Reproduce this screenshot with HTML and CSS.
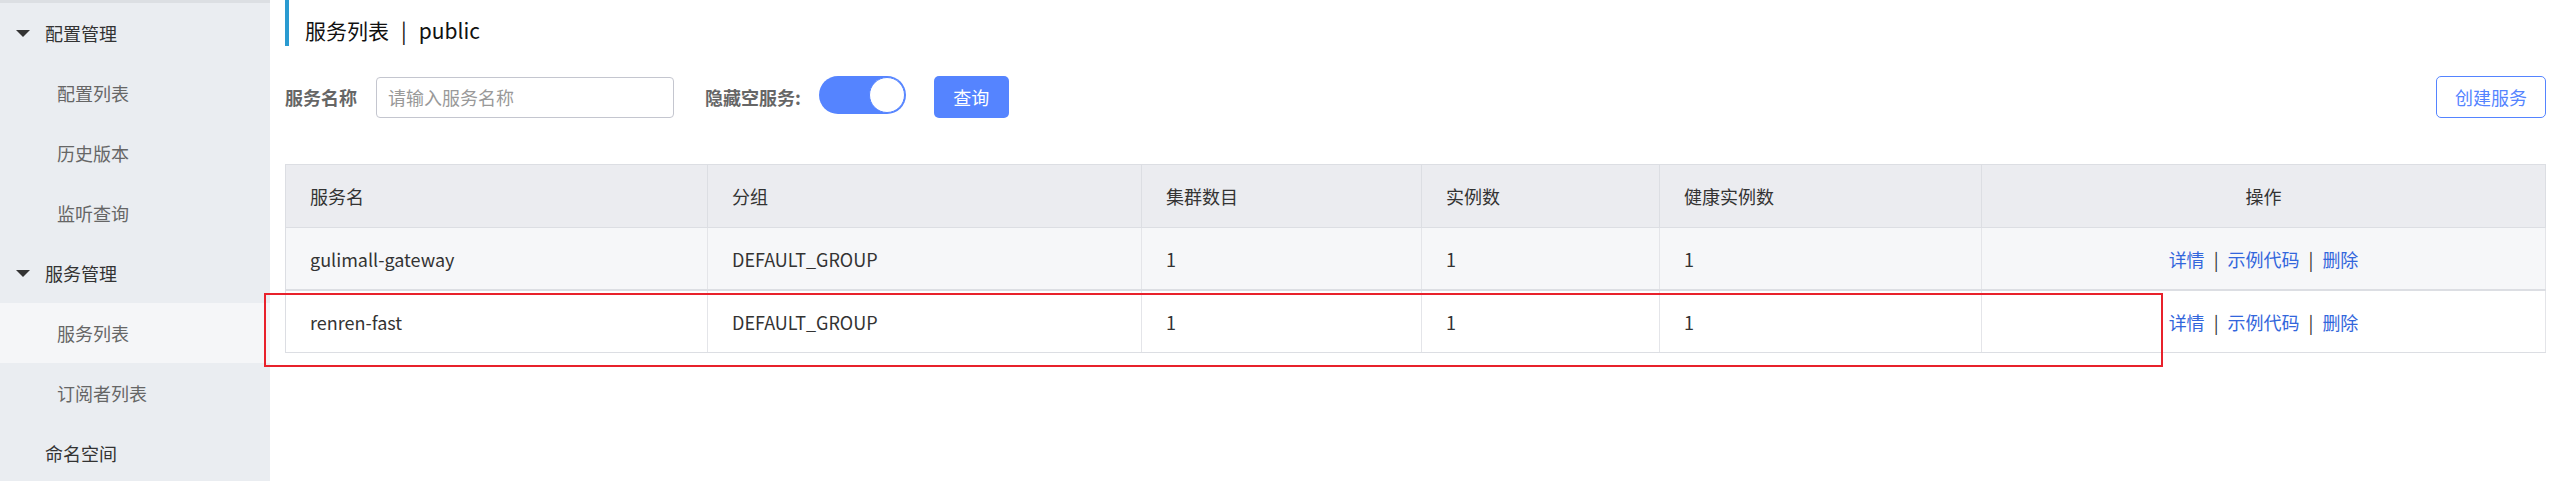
FILE: index.html
```html
<!DOCTYPE html>
<html lang="zh-CN">

<head>
    <meta charset="UTF-8">
    <meta name="viewport" content="width=device-width, initial-scale=1.0">
    <title>服务列表</title>
    <link rel="stylesheet" href="styles.css">
</head>

<body>

    <div class="layout">
        <div class="sidebar">
            <div class="menu-group"><span class="arrow"></span>配置管理</div>
            <div class="menu-item">配置列表</div>
            <div class="menu-item">历史版本</div>
            <div class="menu-item">监听查询</div>
            <div class="menu-group"><span class="arrow"></span>服务管理</div>
            <div class="menu-item active">服务列表</div>
            <div class="menu-item">订阅者列表</div>
            <div class="menu-group plain">命名空间</div>
        </div>

        <div class="main">
            <div class="page-title">服务列表<span class="title-sep">|</span>public</div>

            <div class="toolbar">
                <span class="field-label">服务名称</span>
                <input class="search-input" type="text" placeholder="请输入服务名称">
                <span class="field-label hide-label">隐藏空服务:</span>
                <span class="switch"><span class="knob"></span></span>
                <button class="btn-primary">查询</button>
                <button class="btn-outline">创建服务</button>
            </div>

            <table class="service-table">
                <colgroup>
                    <col style="width: 422px">
                    <col style="width: 434px">
                    <col style="width: 280px">
                    <col style="width: 238px">
                    <col style="width: 322px">
                    <col>
                </colgroup>
                <thead>
                    <tr>
                        <th>服务名</th>
                        <th>分组</th>
                        <th>集群数目</th>
                        <th>实例数</th>
                        <th>健康实例数</th>
                        <th class="ops">操作</th>
                    </tr>
                </thead>
                <tbody>
                    <tr class="hover">
                        <td>gulimall-gateway</td>
                        <td>DEFAULT_GROUP</td>
                        <td>1</td>
                        <td>1</td>
                        <td>1</td>
                        <td class="ops"><a>详情</a><span class="sep">|</span><a>示例代码</a><span class="sep">|</span><a>删除</a></td>
                    </tr>
                    <tr>
                        <td>renren-fast</td>
                        <td>DEFAULT_GROUP</td>
                        <td>1</td>
                        <td>1</td>
                        <td>1</td>
                        <td class="ops"><a>详情</a><span class="sep">|</span><a>示例代码</a><span class="sep">|</span><a>删除</a></td>
                    </tr>
                </tbody>
            </table>
        </div>
    </div>

    <div class="mark-box"></div>

</body>

</html>
```

FILE: styles.css
```css
body {
    margin: 0;
    font-family: "Noto Sans CJK SC", "Noto Sans", sans-serif;
    font-size: 18px;
    color: #333;
    background: #fff;
}

.layout {
    display: flex;
    height: 481px;
    overflow: hidden;
}

.sidebar {
    width: 270px;
    flex-shrink: 0;
    background: #eaedf1;
    border-top: 3px solid #dcdfe3;
}

.menu-group,
.menu-item {
    height: 60px;
    display: flex;
    align-items: center;
}

.menu-group {
    padding-left: 16px;
    color: #333;
}

.menu-group.plain {
    padding-left: 45px;
}

.arrow {
    width: 0;
    height: 0;
    border-left: 7px solid transparent;
    border-right: 7px solid transparent;
    border-top: 7px solid #333;
    margin-right: 15px;
}

.menu-item {
    padding-left: 57px;
    color: #666;
}

.menu-item.active {
    background: #f5f6f8;
}

.main {
    flex: 1;
    padding: 0 14px 0 15px;
}

.page-title {
    height: 46px;
    box-sizing: border-box;
    border-left: 4px solid #2a9bd1;
    padding: 15px 0 0 16px;
    font-size: 21px;
    line-height: 30px;
    color: #111;
}

.title-sep {
    margin: 0 12px;
}

.toolbar {
    display: flex;
    align-items: center;
    height: 42px;
    margin-top: 30px;
}

.field-label {
    font-weight: bold;
    color: #666;
}

.search-input {
    width: 298px;
    height: 41px;
    box-sizing: border-box;
    margin-left: 19px;
    padding: 0 11px;
    border: 1px solid #c4c6cf;
    border-radius: 4px;
    font-family: inherit;
    font-size: 18px;
    outline: none;
}

.search-input::placeholder {
    color: #999;
}

.hide-label {
    margin-left: 31px;
}

.switch {
    position: relative;
    width: 87px;
    height: 38px;
    margin-left: 18px;
    margin-top: -4px;
    border-radius: 19px;
    background: #5584ff;
}

.knob {
    position: absolute;
    right: 1px;
    top: 1px;
    width: 36px;
    height: 36px;
    box-sizing: border-box;
    border-radius: 50%;
    background: #fff;
    border: 1px solid #5584ff;
}

button {
    cursor: pointer;
    font-family: inherit;
    font-size: 18px;
    height: 42px;
    border-radius: 5px;
}

.btn-primary {
    width: 75px;
    margin-left: 28px;
    border: none;
    background: #5584ff;
    color: #fff;
}

.btn-outline {
    width: 110px;
    margin-left: auto;
    border: 1px solid #5584ff;
    background: #fff;
    color: #5584ff;
}

.service-table {
    width: 100%;
    margin-top: 46px;
    border-collapse: collapse;
    table-layout: fixed;
    border: 1px solid #dcdee3;
}

.service-table th,
.service-table td {
    text-align: left;
    padding: 0 24px;
    font-weight: normal;
    white-space: nowrap;
}

.service-table th {
    height: 62px;
    background: #ebecf0;
    border-right: 1px solid #dcdee3;
    border-bottom: 1px solid #dcdee3;
}

.service-table td {
    height: 61px;
    border-right: 1px solid #e4e5e9;
    border-bottom: 1px solid #dcdee3;
}

.service-table tr.hover td {
    background: #f6f7f9;
    border-bottom: 2px solid #dcdee3;
}

.service-table .ops {
    text-align: center;
}

.ops a {
    color: #3266dc;
    cursor: pointer;
}

.ops .sep {
    margin: 0 9px;
    color: #333;
}

.mark-box {
    position: absolute;
    left: 264px;
    top: 293px;
    width: 1899px;
    height: 74px;
    box-sizing: border-box;
    border: 2px solid #e8212b;
}
```
